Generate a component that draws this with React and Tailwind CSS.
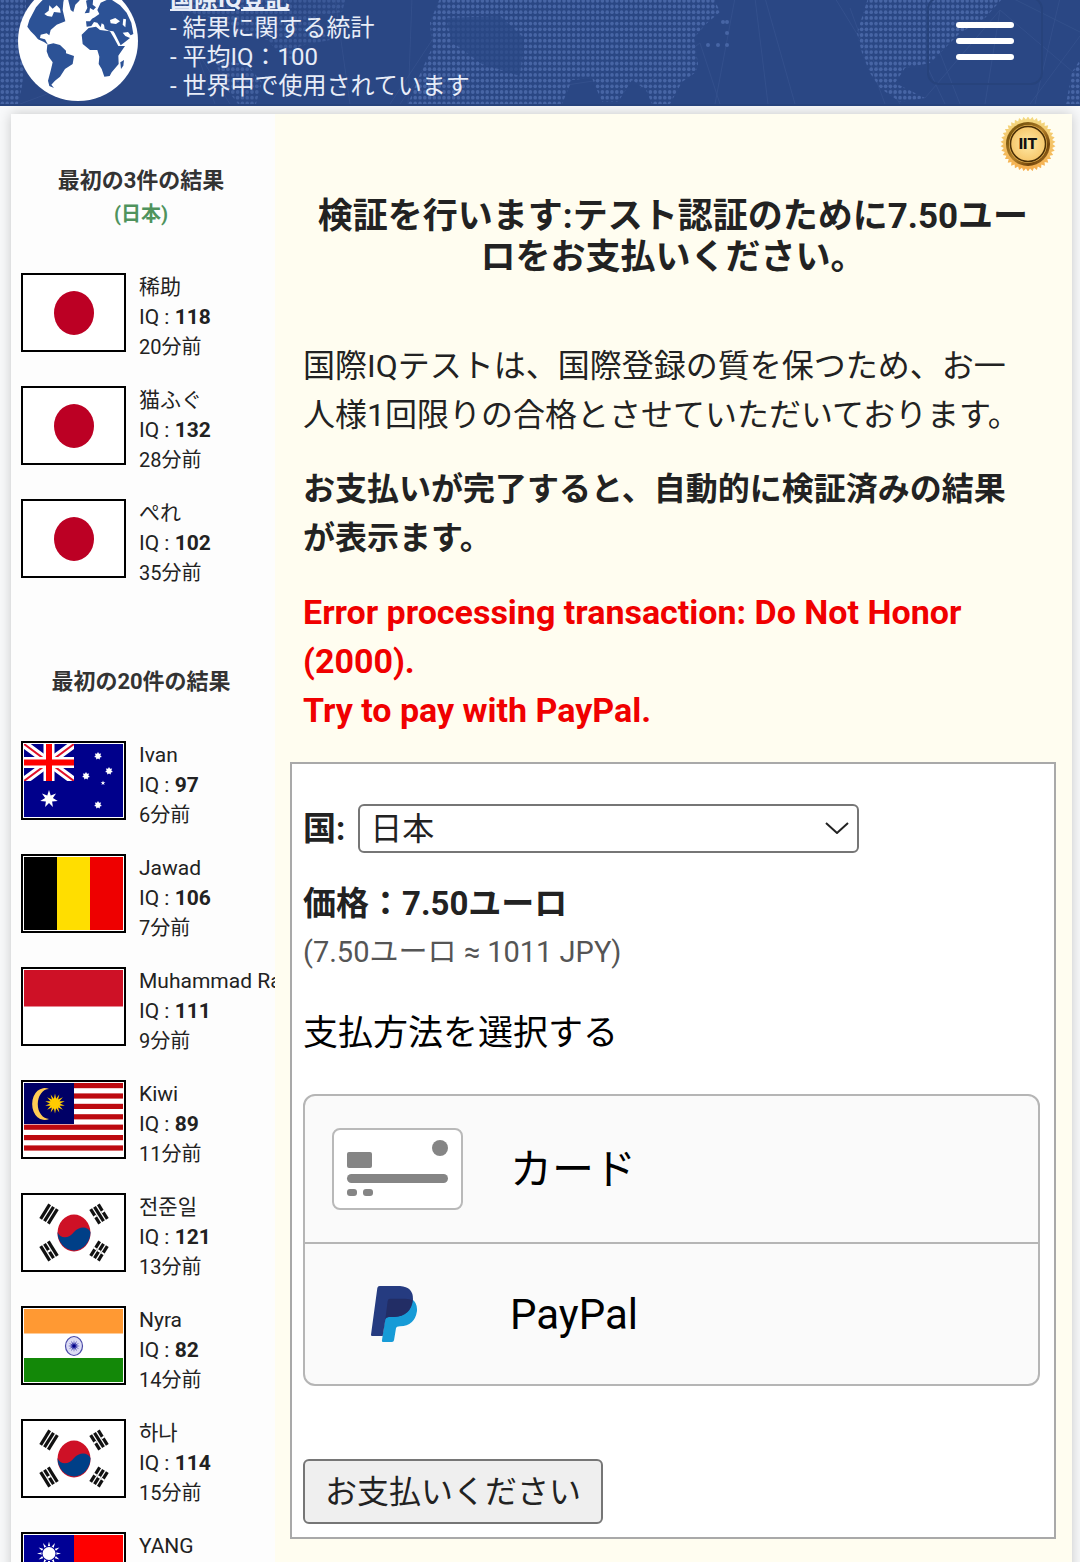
import React from 'react';

const FIRST_RESULTS = [
  { name: '稀助', iq: 118, ago: '20分前', flag: 'jp' },
  { name: '猫ふぐ', iq: 132, ago: '28分前', flag: 'jp' },
  { name: 'ぺれ', iq: 102, ago: '35分前', flag: 'jp' },
];

const WORLD_RESULTS = [
  { name: 'Ivan', iq: 97, ago: '6分前', flag: 'au' },
  { name: 'Jawad', iq: 106, ago: '7分前', flag: 'be' },
  { name: 'Muhammad Ra', iq: 111, ago: '9分前', flag: 'id' },
  { name: 'Kiwi', iq: 89, ago: '11分前', flag: 'my' },
  { name: '전준일', iq: 121, ago: '13分前', flag: 'kr' },
  { name: 'Nyra', iq: 82, ago: '14分前', flag: 'in' },
  { name: '하나', iq: 114, ago: '15分前', flag: 'kr' },
  { name: 'YANG', iq: 105, ago: '16分前', flag: 'tw' },
];

// Star polygon centred on cx, cy
function star(cx, cy, outer, inner, tips) {
  const points = [];
  for (let i = 0; i < tips * 2; i++) {
    const r = i % 2 ? inner : outer;
    const a = (Math.PI * i) / tips - Math.PI / 2;
    points.push(`${(cx + r * Math.cos(a)).toFixed(2)},${(cy + r * Math.sin(a)).toFixed(2)}`);
  }
  return points.join(' ');
}

// Three bars of a Korean trigram, "broken" lists the split ones
function Trigram({ x, y, angle, broken }) {
  return (
    <g transform={`translate(${x} ${y}) rotate(${angle})`}>
      {[-4.5, 0, 4.5].map((dx, i) => (
        <g key={dx}>
          <rect x={dx - 1.6} y="-8.5" width="3.2" height="17" fill="#111" />
          {broken.includes(i) && <rect x={dx - 1.7} y="-1" width="3.4" height="2" fill="#fff" />}
        </g>
      ))}
    </g>
  );
}

const FLAGS = {
  jp: <ellipse cx="50" cy="37" rx="20" ry="22" fill="#bc0024" />,
  au: (
    <>
      <rect width="99" height="73" fill="#00008b" />
      <svg width="50" height="37" viewBox="0 0 50 37">
        <path d="M0 0L50 37M50 0L0 37" stroke="#fff" strokeWidth="8" />
        <path d="M0 0L50 37M50 0L0 37" stroke="#e0102a" strokeWidth="2" />
        <path d="M25 0V37M0 18.5H50" stroke="#fff" strokeWidth="11" />
        <path d="M25 0V37M0 18.5H50" stroke="#f00" strokeWidth="6" />
      </svg>
      <polygon points={star(25, 55, 9, 4, 7)} fill="#fff" />
      <polygon points={star(74, 12, 4, 2.4, 7)} fill="#fff" />
      <polygon points={star(85, 27, 4, 2.4, 7)} fill="#fff" />
      <polygon points={star(62, 32, 4, 2.4, 7)} fill="#fff" />
      <polygon points={star(79, 39, 2.5, 1, 5)} fill="#fff" />
      <polygon points={star(74, 61, 4, 2.4, 7)} fill="#fff" />
    </>
  ),
  be: (
    <>
      <rect width="33" height="73" fill="#000" />
      <rect x="33" width="33" height="73" fill="#ffde00" />
      <rect x="66" width="33" height="73" fill="#ee0000" />
    </>
  ),
  id: <rect width="99" height="36.5" fill="#ce1126" />,
  my: (
    <>
      {[0, 1, 2, 3, 4, 5, 6].map(i => (
        <rect key={i} y={i * 10.4} width="99" height="5.2" fill="#bd0a10" />
      ))}
      <rect width="50" height="41" fill="#000066" />
      <path d="M25 6A12.5 16 0 1 0 25 36A10.500 14 0 1 1 25 6Z" fill="#fc5" />
      <polygon points={star(31, 20.5, 10, 5, 14)} fill="#fc0" />
    </>
  ),
  kr: (
    <>
      <ellipse cx="50" cy="37" rx="16.5" ry="18.5" fill="#ce1126" />
      <path d="M33.5 36A16.5 18.5 0 1 0 66.5 36C64 30 55 30 50 36C45 43 36 43 33.5 36Z" fill="#003f87" />
      <Trigram x={25} y={18} angle={32} broken={[]} />
      <Trigram x={75} y={18} angle={-32} broken={[0, 2]} />
      <Trigram x={25} y={55} angle={-32} broken={[1]} />
      <Trigram x={75} y={55} angle={32} broken={[0, 1, 2]} />
    </>
  ),
  in: (
    <>
      <rect width="99" height="24.5" fill="#ff9933" />
      <rect y="49" width="99" height="24" fill="#138808" />
      <ellipse cx="50" cy="37" rx="8.5" ry="9.5" fill="#dcdcf4" stroke="#4a4aa8" strokeWidth="1.2" />
      <polygon points={star(50, 37, 6, 2.5, 12)} fill="#5050b4" />
      <circle cx="50" cy="37" r="1.8" fill="#000088" />
    </>
  ),
  tw: (
    <>
      <rect width="99" height="73" fill="#fe0000" />
      <rect width="50" height="37" fill="#000095" />
      <polygon points={star(25, 18.5, 12, 6, 12)} fill="#fff" />
      <circle cx="25" cy="18.5" r="7.5" fill="#000095" />
      <circle cx="25" cy="18.5" r="6.5" fill="#fff" />
    </>
  ),
};

function ResultRow({ result }) {
  return (
    <li className="flex gap-[13px]">
      <div className="mt-px h-[79px] w-[105px] shrink-0 border-2 border-black bg-white p-px">
        <svg className="block h-full w-full" viewBox="0 0 99 73" preserveAspectRatio="none">
          {FLAGS[result.flag]}
        </svg>
      </div>
      <div className="text-[21px] leading-[30px] whitespace-nowrap">
        <div>{result.name}</div>
        <div>IQ : <b>{result.iq}</b></div>
        <div className="text-[20px]">{result.ago}</div>
      </div>
    </li>
  );
}

function Globe() {
  return (
    <svg className="h-[120px] w-[120px] shrink-0" viewBox="24 -59 360 360">
      <circle cx="204" cy="121" r="180" fill="#fff" />
      <g fill="#2c5296">
        <path d="M52 78L58 58L78 20L92 4L110 -14L165 -20L160 5L158 28L166 62L140 72L122 88L118 104L110 98L92 102L90 112L105 116L114 132L102 124L84 116L74 104L62 92Z" />
        <path d="M112 132L130 128L150 133L168 150L168 158L192 166L188 190L165 205L150 228L135 240L124 252L132 262L118 256L114 240L122 210L128 185L116 168L110 152Z" />
        <path d="M215 102L236 82L258 78L270 88L300 92L312 112L325 136L345 136L330 158L325 165L326 190L305 215L299 226L283 228L275 205L266 190L268 168L262 148L240 148L218 130Z" />
        <path d="M331 185L342 178L340 195L333 205Z" />
        <path d="M228 62L240 62L246 54L254 50L268 40L262 28L272 6L285 0L300 -6L330 14L350 36L364 66L370 100L362 104L354 94L338 96L346 106L360 112L345 124L332 134L314 98L310 92L296 90L284 84L282 72L275 68L272 80L262 66L252 64L244 76L230 78Z" />
        <path d="M228 0L250 -8L248 12L258 20L250 28L240 22L238 36L224 38L232 22Z" />
        <path d="M170 -24L222 -30L208 0L196 12L190 34L182 28L176 4Z" />
      </g>
      <g fill="#fff">
        <path d="M103 40L116 30L118 14L128 24L140 14L150 24L152 36L132 34L126 48L112 46Z" />
        <path d="M300 58L316 52L330 62L318 70L302 68Z" />
        <path d="M340 54L348 56L346 80L338 72Z" />
      </g>
    </svg>
  );
}

const DOT_COLUMNS = [0, 1, 2, 3, 4];
const DOT_ROWS = [0, 1, 2, 3, 4, 5, 6, 7, 8, 9];

function HeaderMap() {
  return (
    <svg className="absolute inset-0 h-full w-full" viewBox="0 0 1080 106" preserveAspectRatio="xMidYMax slice">
      <defs>
        <pattern id="dots" width="24" height="57" patternUnits="userSpaceOnUse">
          {DOT_ROWS.map(r => DOT_COLUMNS.map(c => (
            <ellipse key={`${r}-${c}`} cx={2.4 + c * 4.8} cy={2.8 + r * 5.7} rx="1.8" ry="1.9" fill="#4765a5" />
          )))}
        </pattern>
      </defs>
      <g stroke="#3c5894" strokeWidth="1" fill="none" opacity="0.5">
        <path d="M180 8L215 106M195 50L230 106M90 80L20 106M400 106L460 20M408 106L412 0M335 0L350 106M440 30L390 106M700 45L720 106M735 0L715 106M755 0L768 106M765 0L795 106" />
        <path d="M835 0L900 106M850 10L885 106M940 55L960 106M928 70L945 106M1000 12L1080 80M1000 12L985 106M1012 0L1080 34M1060 0L1035 106M1080 38L1030 106M1000 12L925 100M700 45L640 90M560 88L600 82" />
      </g>
      <g fill="url(#dots)">
        <path d="M0 0H26V48L24 70L22 88L18 106H0Z" />
        <path d="M176 0H346L342 14L318 18L322 34L330 42L300 48L292 62L276 52L268 42L240 36L224 22L200 18L180 10Z" opacity="0.6" />
        <path d="M214 62L246 66L262 84L256 106H238L226 90Z" opacity="0.8" />
        <path d="M440 0H714L720 14L706 26L694 40L698 66L696 74L682 84L670 106H652L646 92L632 82L618 104H602L592 80L572 82L562 106H408L420 76L432 50L430 24Z" />
        <path d="M868 0H1003L985 20L960 35L945 50L930 65L905 70L895 85L925 100L900 104L880 90L870 75L862 55L857 35Z" />
        <path d="M1080 62L1072 74L1066 106H1080Z" />
      </g>
      <path d="M446 20L500 18L524 40L520 78L482 66L452 44Z" fill="#2a4784" opacity="0.7" />
      <g fill="#4765a5">
        <circle cx="723" cy="24" r="2" />
        <circle cx="727" cy="24" r="2" />
        <circle cx="727" cy="35" r="2" />
        <circle cx="718" cy="47" r="2" />
        <circle cx="727" cy="47" r="2" />
        <circle cx="708" cy="47" r="2" />
      </g>
    </svg>
  );
}

function Badge() {
  return (
    <svg className="h-[54px] w-[56px]" viewBox="0 0 56 54" preserveAspectRatio="none">
      <defs>
        <linearGradient id="rim" x1="0" y1="0" x2="0" y2="1">
          <stop offset="0" stopColor="#f3d981" />
          <stop offset="1" stopColor="#f5ad4c" />
        </linearGradient>
        <linearGradient id="ring" x1="0" y1="0" x2="1" y2="1">
          <stop offset="0" stopColor="#b98a2c" />
          <stop offset="0.2" stopColor="#7a560f" />
          <stop offset="0.5" stopColor="#b5812a" />
          <stop offset="0.75" stopColor="#6f430a" />
          <stop offset="1" stopColor="#c48a30" />
        </linearGradient>
        <radialGradient id="face">
          <stop offset="0" stopColor="#ffeaa6" />
          <stop offset="1" stopColor="#f6c76c" />
        </radialGradient>
      </defs>
      <polygon points={star(28, 27, 27.5, 24.5, 38)} fill="url(#rim)" />
      <circle cx="28" cy="27" r="22" fill="url(#ring)" />
      <circle cx="28" cy="27" r="19" fill="#e3b152" />
      <circle cx="28" cy="27" r="17.5" fill="url(#face)" stroke="#4a2f06" strokeWidth="1.5" />
      <text x="28" y="32" textAnchor="middle" fontFamily="Inter, sans-serif" fontSize="15" fontWeight="800" fill="#111">IIT</text>
    </svg>
  );
}

function CardIcon() {
  return (
    <svg className="h-[82px] w-[131px]" viewBox="0 0 131 82" fill="#858585">
      <rect x="1" y="1" width="129" height="80" rx="7" fill="#fff" stroke="#b9b9b9" strokeWidth="2" />
      <rect x="15" y="24" width="25" height="16" rx="2" />
      <circle cx="108" cy="20" r="8" />
      <rect x="15" y="46" width="101" height="9" rx="4.5" />
      <rect x="15" y="61" width="10" height="7" rx="3" />
      <rect x="31" y="61" width="10" height="7" rx="3" />
    </svg>
  );
}

function PayPalIcon() {
  return (
    <svg className="h-[56px] w-[46px]" viewBox="243 615 138 168">
      <path d="M292 655L366 655Q382 665 381 690Q374 735 330 736Q319 736 318 742L312 778Q311 783 306 783H279Q275 783 276 778L286 706Z" fill="#179bd7" />
      <path d="M269 615H330Q370 618 369 655Q364 706 312 708H296Q287 709 286 716L278 765H246Q243 765 243 761L262 621Q263 615 269 615Z" fill="#253b80" />
      <path d="M300 653H345Q360 653 368 658Q362 706 312 708H296Q288 709 286 714L293 660Q294 653 300 653Z" fill="#222d65" />
    </svg>
  );
}

export default function App() {
  return (
    <div className="h-screen overflow-hidden bg-[#f8f9fa] font-['Roboto','Noto_Sans_CJK_JP','Noto_Sans_CJK_KR',sans-serif] text-[#222]" lang="ja">
      {/* Header */}
      <header className="relative flex h-[106px] items-end overflow-hidden border-b-2 border-[#27437c] bg-[#2a4784] pb-[3px] pl-[18px]">
        <HeaderMap />
        <div className="relative flex flex-1 items-end gap-8">
          <Globe />
          <div className="text-[24px] leading-[29px] text-[#e8edf8]">
            <a href="#" className="font-bold underline">国際IQ登記</a>
            <p>- 結果に関する統計</p>
            <p>- 平均IQ：100</p>
            <p>- 世界中で使用されています</p>
          </div>
        </div>
        <button
          type="button"
          aria-label="メニュー"
          className="relative mr-[37px] mb-4 flex h-[88px] w-[116px] flex-col items-center justify-center gap-[10px] rounded-xl border-2 border-[#27437c]"
        >
          <span className="h-[6px] w-[58px] rounded-full bg-white" />
          <span className="h-[6px] w-[58px] rounded-full bg-white" />
          <span className="h-[6px] w-[58px] rounded-full bg-white" />
        </button>
      </header>

      <div className="mt-2 mr-2 ml-[11px] flex bg-[#fffdf0] shadow-[0_0_12px_rgba(0,0,0,0.2)]">
        {/* Results */}
        <aside className="w-[264px] shrink-0 overflow-hidden bg-[#fdfdfd] pt-[52px] pl-[10px]">
          <div className="mb-10 pr-[14px] text-center font-bold text-[#333]">
            <h2 className="text-[22px] leading-[30px]">最初の3件の結果</h2>
            <p className="text-[20px] leading-[36px] text-[#4f935d]">(日本)</p>
          </div>
          <ul className="flex flex-col gap-[23px]">
            {FIRST_RESULTS.map(r => <ResultRow key={r.ago} result={r} />)}
          </ul>
          <h2 className="mt-[79px] mb-[43px] pr-[14px] text-center text-[22px] leading-[30px] font-bold text-[#333]">
            最初の20件の結果
          </h2>
          <ul className="flex flex-col gap-[23px]">
            {WORLD_RESULTS.map(r => <ResultRow key={r.ago} result={r} />)}
          </ul>
        </aside>

        {/* Payment */}
        <main className="min-w-0 flex-1 pr-4 pl-[15px]">
          <div className="flex justify-end pt-[3px] pb-[25px]">
            <Badge />
          </div>
          <h1 className="mb-16 text-center text-[35px] leading-[41px] font-bold">
            検証を行います:テスト認証のために7.50ユー<br />
            ロをお支払いください。
          </h1>
          <div className="flex flex-col gap-[25px] px-[13px] text-[32px] leading-[49px]">
            <p>
              国際IQテストは、国際登録の質を保つため、お一<br />
              人様1回限りの合格とさせていただいております。
            </p>
            <p className="font-bold">
              お支払いが完了すると、自動的に検証済みの結果<br />
              が表示ます。
            </p>
            <p className="text-[34px] font-bold text-[#f00000]">
              Error processing transaction: Do Not Honor (2000).<br />
              Try to pay with PayPal.
            </p>
          </div>

          <form className="mt-[27px] flex flex-col border-2 border-[#a9a9a9] bg-white pt-10 pr-[14px] pb-[13px] pl-[11px]">
            <div className="flex items-center gap-[13px]">
              <label htmlFor="country" className="text-[33px] leading-[49px] font-bold">国:</label>
              <div className="relative w-[501px]">
                <select
                  id="country"
                  defaultValue="jp"
                  className="h-[49px] w-full appearance-none rounded-md border-2 border-[#767676] bg-white px-[10px] text-[32px] leading-[44px]"
                >
                  <option value="jp">日本</option>
                </select>
                <svg className="pointer-events-none absolute top-[18px] right-[10px] h-3 w-6" viewBox="0 0 24 12" fill="none" stroke="#222" strokeWidth="2">
                  <path d="M1 1L12 11L23 1" />
                </svg>
              </div>
            </div>
            <p className="mt-[26px] text-[33px] leading-[49px] font-bold">価格：7.50ユーロ</p>
            <p className="text-[29px] leading-[49px] text-[#555]">(7.50ユーロ ≈ 1011 JPY)</p>
            <h2 className="mt-8 text-[35px] leading-[49px] text-black">支払方法を選択する</h2>
            <div className="mt-9 flex flex-col divide-y-2 divide-[#b5b5b5] overflow-hidden rounded-xl border-2 border-[#b5b5b5] bg-[#fafafa] text-[42px] text-black">
              <button type="button" className="flex h-[148px] items-center gap-[47px] pl-[27px]">
                <CardIcon />
                <span>カード</span>
              </button>
              <button type="button" className="flex h-[140px] items-center gap-[47px] pl-[27px]">
                <span className="flex w-[131px] justify-center pr-2">
                  <PayPalIcon />
                </span>
                <span>PayPal</span>
              </button>
            </div>
            <button type="submit" className="mt-[73px] h-[65px] self-start rounded-md border-2 border-[#767676] bg-[#efefef] px-5 text-[32px]">
              お支払いください
            </button>
          </form>
        </main>
      </div>
    </div>
  );
}
